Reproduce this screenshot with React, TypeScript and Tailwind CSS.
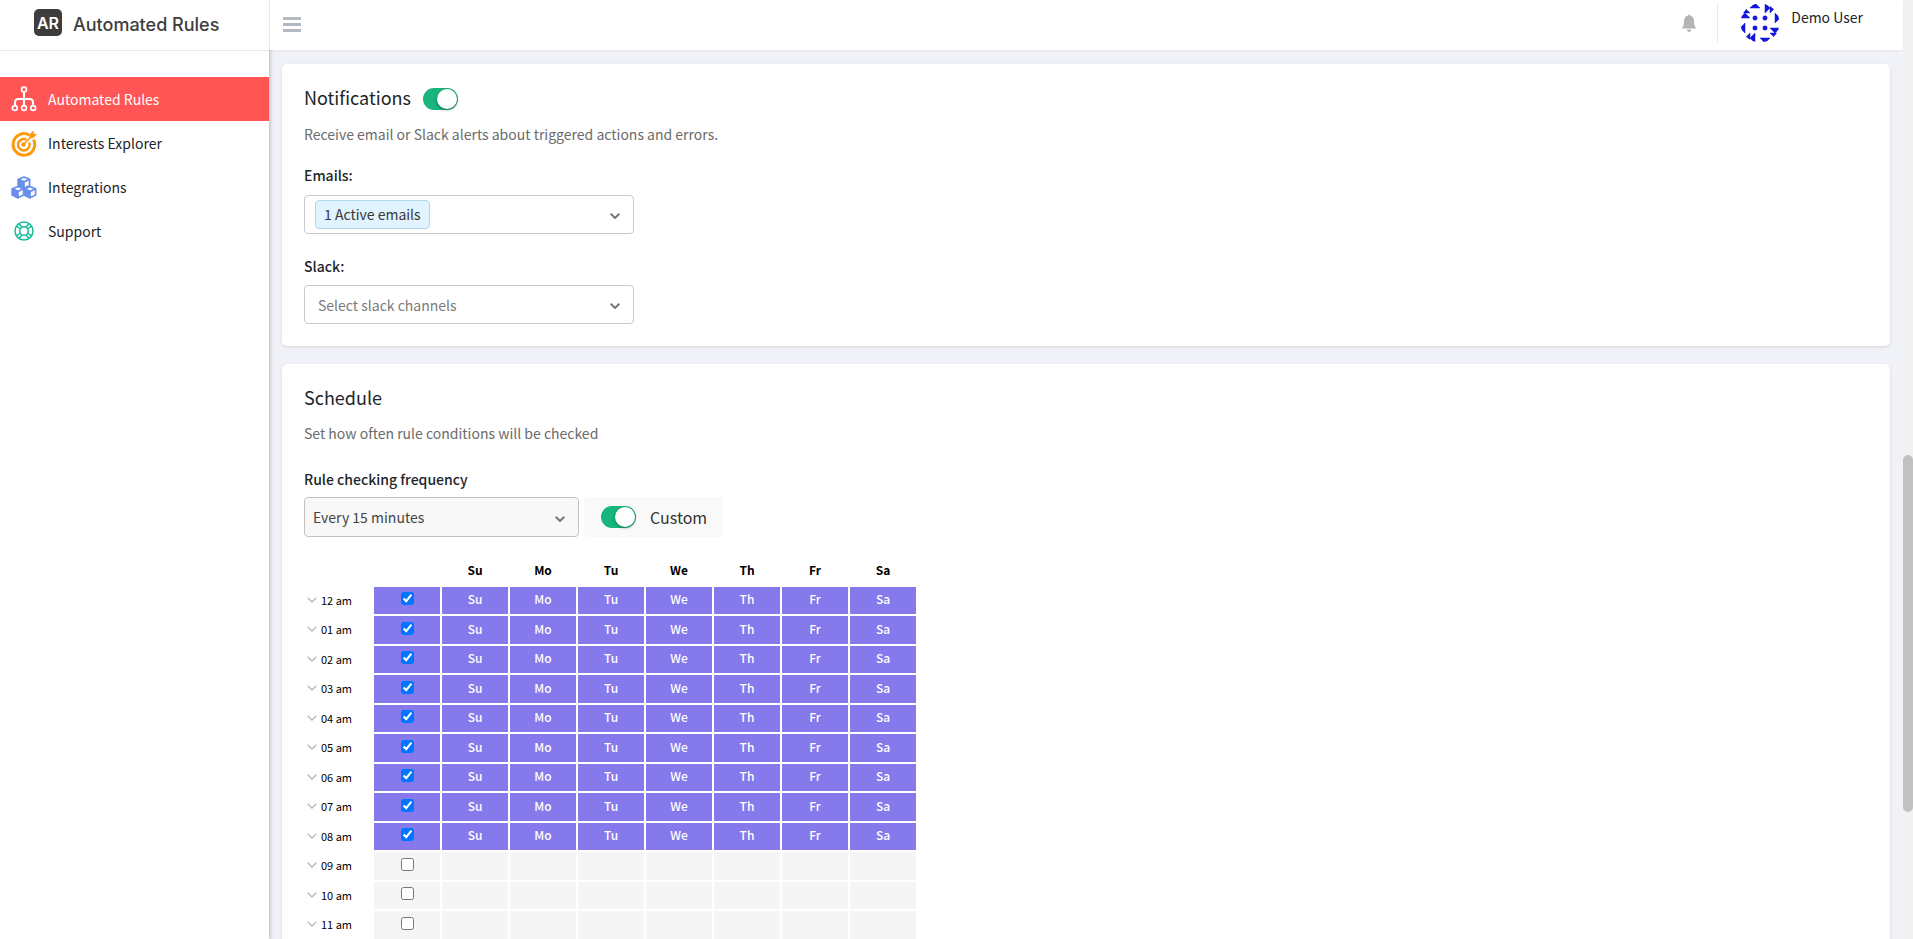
import React from "react";

const days = ["Su", "Mo", "Tu", "We", "Th", "Fr", "Sa"];
const hours = ["12", "01", "02", "03", "04", "05", "06", "07", "08", "09", "10", "11"].map((h, i) => ({
  label: `${h} am`,
  active: i < 9,
}));

function Chevron({ className, stroke = 2 }: { className: string; stroke?: number }) {
  return (
    <svg viewBox="0 0 10 6" className={className} fill="none" stroke="currentColor" strokeWidth={stroke} aria-hidden="true">
      <path d="M0.7 0.7 5 5 9.3 0.7" />
    </svg>
  );
}

function Toggle({ label, id }: { label: string; id: string }) {
  return (
    <span className="relative inline-flex h-[22px] w-[35px] shrink-0">
      <input
        id={id}
        type="checkbox"
        defaultChecked
        aria-label={label}
        className="peer h-full w-full cursor-pointer appearance-none rounded-full bg-gray-300 checked:bg-[#18b57c]"
      />
      <span className="pointer-events-none absolute right-px top-px size-5 rounded-full bg-white shadow-[0_1px_3px_rgba(0,0,0,0.4)]" />
    </span>
  );
}

function RulesIcon() {
  return (
    <svg viewBox="0 0 26 26" className="size-[26px]" fill="none" stroke="white" aria-hidden="true">
      <g strokeWidth="1.7">
        <circle cx="13" cy="3.6" r="2.400" />
        <circle cx="3.8" cy="22" r="2.400" />
        <circle cx="13" cy="22" r="2.400" />
        <circle cx="22.200" cy="22" r="2.400" />
      </g>
      <path strokeWidth="2" d="M13 6v13M4 19v-2.500q0-3.500 3.500-3.500H18.500q3.500 0 3.500 3.500V19" />
    </svg>
  );
}

function TargetIcon() {
  return (
    <svg viewBox="0 0 26 27" className="h-[27px] w-[26px]" fill="none" stroke="#fd9a0d" aria-hidden="true">
      <path strokeWidth="3" d="M18.500 5.200A10.800 10.800 0 1 0 22.500 9.500" />
      <path strokeWidth="2.500" d="M15.500 9.600A5.800 5.800 0 1 0 18.200 12.500" />
      <circle cx="12.500" cy="14.500" r="2.300" fill="#fd9a0d" stroke="none" />
      <path strokeWidth="1.600" d="M12.500 14.500 21 6" />
      <path fill="#fd9a0d" stroke="none" d="M18.500 7.800V4.400L22.300 0.600 22.900 3.700 26 4.300 22.200 8.100Z" />
    </svg>
  );
}

function CubesIcon() {
  return (
    <svg viewBox="0 0 26 23" className="h-[23px] w-[26px]" aria-hidden="true">
      <g fill="white" stroke="#6890ea" strokeWidth="1.700" strokeLinejoin="round">
        {[[13, 1], [7, 10.5], [19, 10.5]].map(([x, y]) => (
          <g key={`${x}`} transform={`translate(${x} ${y})`}>
            <path d="M0 0 5.600 2.400V8.600L0 11.200-5.600 8.600V2.400Z" />
            <path fill="#6890ea" d="M-5.600 2.400 0 4.900V11.200L-5.600 8.600Z" />
            <path fill="none" d="M0 4.900 5.600 2.400" />
          </g>
        ))}
      </g>
    </svg>
  );
}

function SupportIcon() {
  return (
    <svg viewBox="0 0 20 20" className="size-5" fill="none" stroke="#1bbc9b" strokeWidth="1.500" aria-hidden="true">
      <circle cx="10" cy="10" r="9" />
      <circle cx="10" cy="10" r="4.300" />
      <path d="M2.800 5.200 6.200 8M5.200 2.800 8 6.200M17.200 5.200 13.800 8M14.800 2.800 12 6.200M2.800 14.800 6.200 12M5.200 17.200 8 13.800M17.200 14.800 13.800 12M14.800 17.200 12 13.800" />
    </svg>
  );
}

const nav = [
  { label: "Automated Rules", icon: <RulesIcon />, active: true },
  { label: "Interests Explorer", icon: <TargetIcon />, active: false },
  { label: "Integrations", icon: <CubesIcon />, active: false },
  { label: "Support", icon: <SupportIcon />, active: false },
];

function Avatar() {
  return (
    <svg viewBox="0 0 40 40" className="size-10" role="img" aria-label="Demo User avatar">
      <clipPath id="avatar-clip">
        <circle cx="20" cy="20" r="19.500" />
      </clipPath>
      <g clipPath="url(#avatar-clip)" fill="#1414dc" stroke="#1414dc" strokeWidth="0.500">
        <circle cx="15" cy="15" r="2.200" />
        <circle cx="25" cy="15" r="2.200" />
        <circle cx="15" cy="25" r="2.200" />
        <circle cx="25" cy="25" r="2.200" />
        <path d="M10 5 15 0 20 5ZM25 0 30 5 25 10ZM30 0 35 5 30 10Z" />
        <path d="M35 10 40 15 35 20ZM30 25H40L35 30ZM30 30H40L35 35Z" />
        <path d="M20 35H30L25 40ZM15 30V40L10 35ZM10 30V40L5 35Z" />
        <path d="M5 20V30L0 25ZM0 15 5 10 10 15ZM0 10 5 5 10 10Z" />
      </g>
    </svg>
  );
}

export default function App() {
  return (
    <div className="flex h-screen overflow-hidden bg-[#f0f2f7] font-['Noto_Sans_CJK_SC','Open_Sans',sans-serif] text-[14px] leading-5 text-[#212529]">
      <aside className="z-10 flex w-[269px] shrink-0 flex-col bg-white shadow-[1px_0_4px_rgba(0,0,0,0.25)]">
        <div className="flex h-[51px] shrink-0 items-center gap-[11px] border-b border-[#e9e9e9] pb-[5px] pl-[34px] font-['Inter',sans-serif] text-[#3d3d3d]">
          <span className="flex h-[27px] w-7 items-center justify-center rounded-[5px] bg-[#3d3d3d] text-[16px] font-semibold text-white">AR</span>
          <span className="pt-1 text-[18px] font-medium">Automated Rules</span>
        </div>
        <nav className="flex flex-col pt-[26px]">
          {nav.map((item) => (
            <a
              key={item.label}
              href="#"
              className={`flex h-11 items-center gap-[11px] pl-[11px] ${item.active ? "bg-[#ff5555] text-white" : ""}`}
            >
              <span className="flex w-[26px] justify-center">{item.icon}</span>
              {item.label}
            </a>
          ))}
        </nav>
      </aside>

      <div className="flex min-w-0 flex-1 flex-col">
        <header className="z-20 flex h-[50px] shrink-0 items-center justify-between border-l border-[#e9e9e9] bg-white pl-[13px] pr-10 shadow-[0_1px_2px_rgba(0,0,0,0.05)]">
          <button type="button" aria-label="Toggle menu" className="flex w-[18px] flex-col gap-[3px] pb-[2px]">
            <span className="h-[3px] bg-[#b1bac2]" />
            <span className="h-[3px] bg-[#b1bac2]" />
            <span className="h-[3px] bg-[#b1bac2]" />
          </button>
          <div className="flex h-full items-center pb-[5px]">
            <button type="button" aria-label="Alerts" className="mr-5 text-[#b4b4b4]">
              <svg viewBox="0 0 16 18" className="h-[18px] w-4" fill="currentColor" aria-hidden="true">
                <path d="M8 0 9 1.500C12 2.200 13 4.500 13 7.500 13 11 13.800 12.800 15.500 14.500H0.500C2.200 12.800 3 11 3 7.500 3 4.500 4 2.200 7 1.500ZM6 15.500H10Q10 18 8 18 6 18 6 15.500Z" />
              </svg>
            </button>
            <span className="mr-[22px] h-[39px] w-px bg-[#e9e9e9]" />
            <Avatar />
            <span className="pb-[11px] pl-[11px]">Demo User</span>
          </div>
        </header>

        <main className="flex min-h-0 flex-1 flex-col gap-[18px] overflow-hidden px-[13px] pt-[14px]">
          <section className="shrink-0 rounded-[5px] bg-white px-[22px] pb-[22px] pt-[23px] shadow-[0_1px_3px_rgba(0,0,0,0.12)]">
            <div className="flex h-6 items-center gap-3">
              <h2 className="pb-1 text-[18px]">Notifications</h2>
              <Toggle id="notifications" label="Notifications" />
            </div>
            <p className="mt-[13px] text-[#6b6b6b]">Receive email or Slack alerts about triggered actions and errors.</p>
            <p id="emails-label" className="mt-[21px] font-medium">Emails:</p>
            <button type="button" aria-labelledby="emails-label" className="mt-[10px] flex h-[39px] w-[330px] items-center justify-between rounded border border-[#c9c9c9] bg-white pl-[10px] pr-[13px]">
              <span className="flex h-[29px] items-center rounded border border-[#add8ea] bg-[#e0f3fe] px-2 pb-[2px] text-[#383838]">1 Active emails</span>
              <Chevron className="mt-[2px] h-[6px] w-[10px] text-[#777]" />
            </button>
            <p id="slack-label" className="mt-[22px] font-medium">Slack:</p>
            <button type="button" aria-labelledby="slack-label" className="mt-[9px] flex h-[39px] w-[330px] items-center justify-between rounded border border-[#c9c9c9] bg-white px-[13px] text-[#7a7a7a]">
              Select slack channels
              <Chevron className="mt-[2px] h-[6px] w-[10px] text-[#777]" />
            </button>
          </section>

          <section className="flex-1 rounded-t-[5px] bg-white px-[22px] pt-[21px] shadow-[0_1px_3px_rgba(0,0,0,0.12)]">
            <h2 className="text-[18px] leading-6">Schedule</h2>
            <p className="mt-[14px] text-[#6b6b6b]">Set how often rule conditions will be checked</p>
            <label htmlFor="frequency" className="mt-[26px] block font-medium">Rule checking frequency</label>
            <div className="mt-2 flex gap-[5px]">
              <div className="relative">
                <select id="frequency" className="h-10 w-[275px] appearance-none rounded border border-[#c2c2c2] bg-[#f8f8f8] px-2 text-[#444]">
                  <option>Every 15 minutes</option>
                </select>
                <Chevron className="pointer-events-none absolute right-[14px] top-[19px] h-[6px] w-[10px] text-[#777]" />
              </div>
              <div className="flex h-10 w-[139px] items-center gap-[14px] rounded bg-[#f9f9f9] pl-[17px]">
                <Toggle id="custom" label="Custom schedule" />
                <label htmlFor="custom" className="text-[16px] text-[#333]">Custom</label>
              </div>
            </div>

            <table className="mt-[18px] table-fixed border-collapse text-center text-[12px] leading-4 text-black">
              <colgroup>
                <col className="w-[69px]" />
                <col span={8} className="w-[68px]" />
              </colgroup>
              <thead>
                <tr className="h-[31px]">
                  <td />
                  <td />
                  {days.map((d) => (
                    <th key={d} scope="col" className="font-bold">{d}</th>
                  ))}
                </tr>
              </thead>
              <tbody>
                {hours.map((h) => (
                  <tr key={h.label} className="odd:h-[29px] even:h-[30px]">
                    <th scope="row" className="p-0 pb-[2px] font-normal">
                      <button type="button" className="flex items-center gap-1 pl-[3px] text-[11px]">
                        <Chevron className="h-[6px] w-[10px] text-[#bbb]" stroke={1.5} />
                        {h.label}
                      </button>
                    </th>
                    <td className={`border-2 border-white p-0 pb-1 ${h.active ? "bg-[#8579ec]" : "bg-[#f5f5f5]"}`}>
                      <input type="checkbox" defaultChecked={h.active} aria-label={h.label} className="mx-auto block size-[13px]" />
                    </td>
                    {days.map((d) => (
                      <td key={d} className={`border-2 border-white p-0 pb-[3px] font-medium text-white ${h.active ? "bg-[#8579ec]" : "bg-[#f5f5f5]"}`}>
                        {h.active ? d : ""}
                      </td>
                    ))}
                  </tr>
                ))}
              </tbody>
            </table>
          </section>
        </main>
      </div>

      <div className="flex w-[10px] shrink-0 flex-col bg-[#f1f1f1]" aria-hidden="true">
        <span className="h-[48.5%]" />
        <span className="h-[38%] rounded-full bg-[#c1c1c1]" />
      </div>
    </div>
  );
}
